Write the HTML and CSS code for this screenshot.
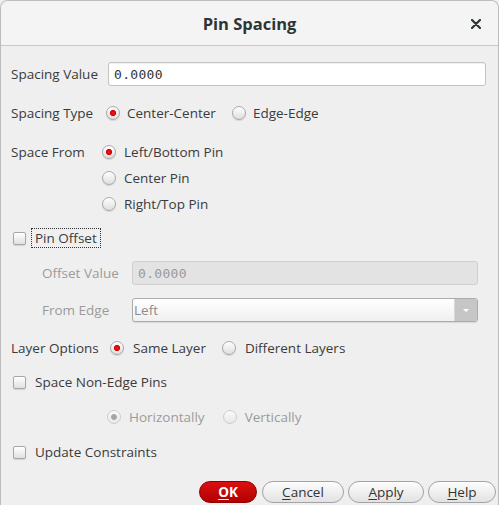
FILE: index.html
```html
<!DOCTYPE html>
<html>
<head>
<meta charset="utf-8">
<link rel="stylesheet" href="styles.css">
</head>
<body>
<div class="window">
  <div class="titlebar">
    <span></span>
    <span class="title">Pin Spacing</span>
    <span class="close"><svg width="10" height="10" viewBox="0 0 10 10"><path d="M1 1L9 9M9 1L1 9" stroke="#2e3436" stroke-width="2.2" stroke-linecap="round"/></svg></span>
  </div>
  <div class="content">
    <div class="row r1">
      <span class="lbl">Spacing Value</span>
      <div class="input">0.0000</div>
    </div>
    <div class="row r2">
      <span class="lbl">Spacing Type</span>
      <span class="opt"><span class="radio on"></span>Center-Center</span>
      <span class="opt"><span class="radio"></span>Edge-Edge</span>
    </div>
    <div class="group r3">
      <span class="lbl glbl">Space From</span>
      <div class="opts">
        <span class="opt"><span class="radio on"></span>Left/Bottom Pin</span>
        <span class="opt"><span class="radio"></span>Center Pin</span>
        <span class="opt"><span class="radio"></span>Right/Top Pin</span>
      </div>
    </div>
    <div class="row r4">
      <span class="check"></span><span class="focus">Pin Offset</span>
    </div>
    <div class="row r5 sub">
      <span class="lbl dis sublbl">Offset Value</span>
      <div class="input disabled">0.0000</div>
    </div>
    <div class="row r6 sub">
      <span class="lbl dis sublbl">From Edge</span>
      <div class="combo"><span class="combo-text">Left</span><span class="combo-btn"><svg width="8" height="5" viewBox="0 0 8 5"><path d="M1 1h6L4 4z" fill="#fff"/></svg></span></div>
    </div>
    <div class="row r7">
      <span class="lbl">Layer Options</span>
      <span class="opt"><span class="radio on"></span>Same Layer</span>
      <span class="opt"><span class="radio"></span>Different Layers</span>
    </div>
    <div class="row r8">
      <span class="check"></span><span class="clbl">Space Non-Edge Pins</span>
    </div>
    <div class="row r9 dis">
      <span class="opt"><span class="radio on disr"></span>Horizontally</span>
      <span class="opt"><span class="radio disr"></span>Vertically</span>
    </div>
    <div class="row r10">
      <span class="check"></span><span class="clbl">Update Constraints</span>
    </div>
    <div class="buttons">
      <span class="btn ok"><u>O</u>K</span>
      <span class="btn cancel"><u>C</u>ancel</span>
      <span class="btn apply"><u>A</u>pply</span>
      <span class="btn help"><u>H</u>elp</span>
    </div>
  </div>
</div>
</body>
</html>
```

FILE: styles.css
```css
html, body {
  margin: 0;
  padding: 0;
  background: #efefef;
}
.window {
  width: 499px;
  height: 505px;
  box-sizing: border-box;
  border: 1px solid #bcbcbc;
  border-bottom: none;
  border-radius: 8px 8px 0 0;
  background: #efefef;
  overflow: hidden;
  font-family: "Open Sans", sans-serif;
  font-size: 13.5px;
  color: #3b3b3b;
}
.titlebar {
  height: 44px;
  background: #f4f4f4;
  border-bottom: 1px solid #c6c6c6;
  display: grid;
  grid-template-columns: 1fr auto 1fr;
  align-items: center;
}
.title {
  font-weight: bold;
  font-size: 16.5px;
  color: #2e3436;
  padding-top: 1px;
}
.close {
  justify-self: end;
  padding-right: 17px;
  display: flex;
  padding-top: 2px;
}
.content {
  padding: 16px 2px 0 10px;
}
.row {
  display: flex;
  align-items: center;
  height: 24px;
}
.lbl {
  white-space: nowrap;
  flex: none;
}
.r1 .lbl { width: 97px; }
.input {
  flex: 1;
  height: 24px;
  box-sizing: border-box;
  background: #fff;
  border: 1px solid #c4c4c4;
  border-radius: 3px;
  box-shadow: inset 0 1px 1px rgba(0,0,0,0.06);
  font-family: "DejaVu Sans Mono", monospace;
  font-size: 13px;
  letter-spacing: 0.3px;
  padding: 2px 5px 0;
  line-height: 19px;
  color: #333;
}
.r1 .input { margin-right: 10px; }
.r2 { margin-top: 15px; }
.r2 .lbl { width: 95px; }
.opt {
  display: flex;
  align-items: center;
  gap: 7px;
  white-space: nowrap;
}
.row .opt + .opt { margin-left: 16px; }
.radio {
  width: 14px;
  height: 14px;
  box-sizing: border-box;
  border-radius: 50%;
  border: 1px solid #a9a9a9;
  background: linear-gradient(#ffffff, #dedede);
  box-shadow: 0 1px 1px rgba(0,0,0,0.12);
  flex: none;
}
.radio.on {
  background: radial-gradient(circle at 50% 50%, #ff1a1a 0, #d40000 2.7px, rgba(200,0,0,0) 3.5px), linear-gradient(#ffffff, #dedede);
}
.radio.disr {
  border-color: #cdcdcd;
  background: linear-gradient(#fafafa, #e8e8e8);
  box-shadow: none;
}
.radio.on.disr {
  background: radial-gradient(circle at 50% 50%, #a0a0a0 0, #a8a8a8 2.5px, rgba(160,160,160,0) 3.4px), linear-gradient(#fafafa, #e8e8e8);
}
.group {
  display: flex;
  margin-top: 14px;
}
.glbl {
  width: 91px;
  line-height: 26px;
}
.opts {
  display: flex;
  flex-direction: column;
}
.opts .opt {
  height: 26px;
  gap: 8px;
}
.check {
  width: 13px;
  height: 13px;
  box-sizing: border-box;
  border: 1px solid #a6a6a6;
  border-radius: 2px;
  background: linear-gradient(#ffffff, #e0e0e0);
  box-shadow: 0 1px 1px rgba(0,0,0,0.12);
  margin-left: 2px;
  flex: none;
}
.r4 { margin-top: 9px; }
.focus {
  margin-left: 5px;
  border: 1px dotted #333;
  padding: 0 3px;
  line-height: 18px;
}
.clbl { margin-left: 9px; }
.sub { margin-right: 18px; }
.sublbl {
  margin-left: 31px;
  width: 90px;
}
.dis, .dis .opt { color: #9b9b9b; }
.r5 { margin-top: 11px; }
.input.disabled {
  background: #e3e3e3;
  border-color: #cfcfcf;
  color: #9a9a9a;
  box-shadow: none;
}
.r6 { margin-top: 13px; }
.combo {
  flex: 1;
  height: 24px;
  box-sizing: border-box;
  border: 1px solid #acacac;
  border-radius: 3px;
  background: linear-gradient(#ffffff, #f0f0f0);
  box-shadow: 0 1px 1px rgba(0,0,0,0.1);
  display: flex;
  overflow: hidden;
}
.combo-text {
  flex: 1;
  padding-left: 1px;
  line-height: 22px;
  color: #8c8c8c;
}
.combo-btn {
  width: 22px;
  background: #c6c6c6;
  border-left: 1px solid #d8d8d8;
  display: flex;
  align-items: center;
  justify-content: center;
}
.r7 { margin-top: 14px; }
.r7 .lbl { width: 99px; }
.r7 .opt { gap: 9px; }
.r8 { margin-top: 10px; }
.r9 { margin-top: 11px; padding-left: 96px; }
.r9 .opt { gap: 8px; }
.row.r9 .opt + .opt { margin-left: 18px; }
.r10 { margin-top: 11px; }
.buttons {
  display: flex;
  justify-content: flex-end;
  gap: 4px;
  margin-top: 17px;
}
.btn {
  height: 22px;
  box-sizing: border-box;
  border: 1px solid #a3a3a3;
  border-radius: 11px;
  background: linear-gradient(#fdfdfd, #e2e2e2);
  display: flex;
  align-items: center;
  justify-content: center;
  color: #333;
  line-height: 20px;
}
.btn u { text-underline-offset: 2px; }
.ok {
  width: 58px;
  background: linear-gradient(#dc1010, #b00000);
  border-color: #900000;
  color: #fff;
  font-weight: bold;
  margin-right: 1px;
}
.cancel { width: 82px; }
.apply { width: 76px; }
.help { width: 68px; }
```
